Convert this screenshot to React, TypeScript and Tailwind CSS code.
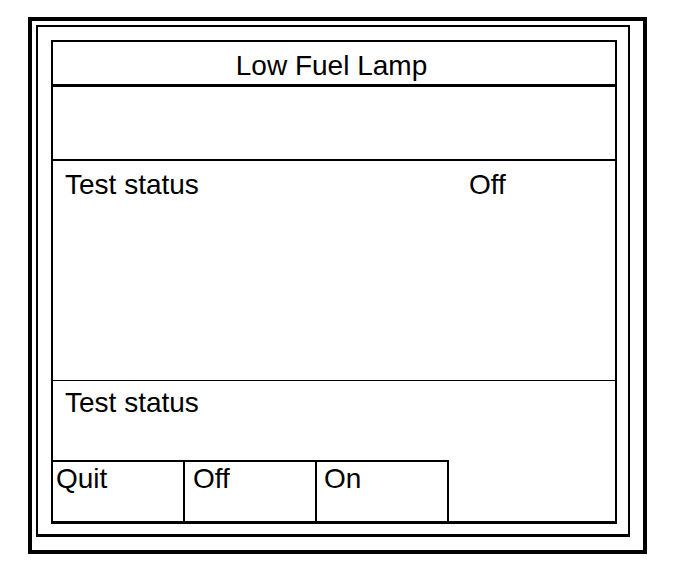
const font = { fontFamily: '"Liberation Sans", Arial, sans-serif' }

const buttons = [
  { label: "Quit", pad: "pl-[3px]" },
  { label: "Off", pad: "pl-[8px]" },
  { label: "On", pad: "pl-[7px]" },
]

export default function App() {
  return (
    <div className="min-h-[566px] w-[688px] bg-white pl-[28px] pt-[17px] text-black" style={font}>
      <div className="h-[537px] w-[619px] border-4 border-black pl-[4px] pt-[4px]">
        <div className="h-[512px] w-[594px] border-2 border-b-[3px] border-black pl-[13px] pt-[13px]">
          <div className="flex h-[484px] w-[566px] flex-col border-2 border-b-[3px] border-black">
            <div className="h-[45px] shrink-0 border-b-[3px] border-black pr-[5px] pt-[10px] text-center text-[28px] leading-[27px]">
              Low Fuel Lamp
            </div>
            <div className="h-[74px] shrink-0 border-b-2 border-black" />
            <div className="flex h-[220px] shrink-0 border-b border-black pl-[12px] pt-[10px] text-[28px] leading-[27px]">
              <span className="w-[404px]">Test status</span>
              <span>Off</span>
            </div>
            <div className="h-[79px] shrink-0 pl-[12px] pt-[8px] text-[28px] leading-[27px]">Test status</div>
            <div className="flex flex-1">
              {buttons.map((b) => (
                <div
                  key={b.label}
                  className={`w-[132px] border-r-2 border-t-2 border-black pt-[3px] text-[28px] leading-[27px] ${b.pad}`}
                >
                  {b.label}
                </div>
              ))}
            </div>
          </div>
        </div>
      </div>
    </div>
  )
}
